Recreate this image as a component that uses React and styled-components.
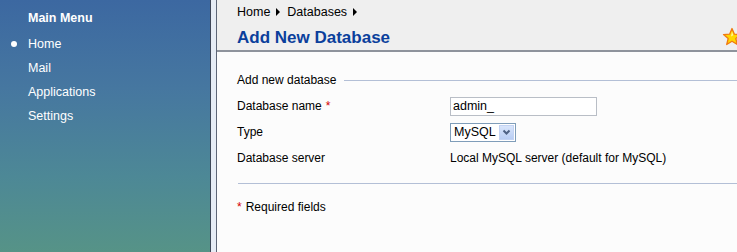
import React from 'react';
import styled, { createGlobalStyle } from 'styled-components';

const GlobalStyle = createGlobalStyle`
  html, body {
    margin: 0;
    padding: 0;
    background: #fcfcfc;
  }
  body {
    font-family: "Liberation Sans", Arial, sans-serif;
    font-size: 12px;
    color: #000;
  }
`;

const Page = styled.div`
  display: flex;
  height: 252px;
  overflow: hidden;
`;

const Sidebar = styled.aside`
  width: 210px;
  flex-shrink: 0;
  background: linear-gradient(180deg, #3c68a1 0%, #4677a0 35%, #4d8896 70%, #569387 100%);
  padding: 10px 0 0 0;
  box-sizing: border-box;
  color: #fff;
`;

const MenuTitle = styled.div`
  font-weight: bold;
  font-size: 12.5px;
  padding-left: 28px;
  height: 16px;
  line-height: 16px;
  margin-bottom: 10px;
`;

const MenuList = styled.ul`
  list-style: none;
  margin: 0;
  padding: 0;
`;

const MenuItem = styled.li`
  position: relative;
  padding-left: 28px;
  height: 24px;
  line-height: 16px;
  font-size: 12.5px;

  &::before {
    content: '';
    display: ${p => (p.$active ? 'block' : 'none')};
    position: absolute;
    left: 11px;
    top: 5px;
    width: 6px;
    height: 6px;
    border-radius: 50%;
    background: #fff;
  }
`;

const Divider = styled.div`
  width: 5px;
  flex-shrink: 0;
  background: #e6ecf5;
  border-left: 1px solid #3e4758;
  border-right: 1px solid #5d6576;
`;

const Main = styled.main`
  flex: 1;
  display: flex;
  flex-direction: column;
  overflow: hidden;
  background: #fcfcfc;
`;

const Header = styled.header`
  background: #efefef;
  height: 52px;
  border-bottom: 2px solid #8e939c;
  padding: 4px 0 0 20px;
  box-sizing: border-box;
`;

const Crumbs = styled.div`
  display: flex;
  align-items: center;
  gap: 5px;
  font-size: 12.5px;
  height: 16px;
  line-height: 16px;
`;

const Arrow = styled.span`
  width: 0;
  height: 0;
  border-top: 4px solid transparent;
  border-bottom: 4px solid transparent;
  border-left: 4px solid #000;
  margin: 0 2px 0 1px;
`;

const TitleRow = styled.div`
  display: flex;
  align-items: center;
  margin-top: 7px;
`;

const Title = styled.h1`
  margin: 0;
  font-size: 17px;
  font-weight: bold;
  color: #0b3f9c;
  line-height: 22px;
  flex: 1;
`;

const Star = styled.svg`
  width: 20px;
  height: 20px;
  margin-right: -5px;
  margin-top: -2px;
`;

const Content = styled.section`
  padding: 20px 0 0 20px;
`;

const Legend = styled.div`
  display: flex;
  align-items: center;
  gap: 8px;
  font-size: 12px;
  height: 16px;

  &::after {
    content: '';
    flex: 1;
    height: 1px;
    background: #b3bfd6;
  }
`;

const Rows = styled.div`
  margin-top: 5px;
  display: grid;
  grid-template-columns: 213px 1fr;
  grid-auto-rows: 26px;
  align-items: center;
  font-size: 12px;
`;

const Label = styled.div`
  line-height: 16px;
`;

const Req = styled.span`
  color: #d40000;
  margin-left: ${p => (p.$after ? '4px' : '0')};
  margin-right: ${p => (p.$after ? '0' : '4px')};
`;

const TextInput = styled.input`
  width: 147px;
  height: 19px;
  box-sizing: border-box;
  border: 1px solid #b9bec6;
  background: #fff;
  font-family: "Liberation Sans", Arial, sans-serif;
  font-size: 12.5px;
  padding: 0 2px;
  color: #000;
  outline: none;
`;

const Select = styled.div`
  display: inline-flex;
  align-items: center;
  width: 66px;
  height: 19px;
  box-sizing: border-box;
  border: 1px solid #7f9db9;
  background: #fff;
  padding-left: 3px;
  font-size: 12.5px;
  justify-content: space-between;
`;

const SelectButton = styled.span`
  width: 15px;
  height: 15px;
  margin-right: 1px;
  background: linear-gradient(180deg, #d9e5fb 0%, #b8cdf4 100%);
  border: 1px solid #c3d3f3;
  box-sizing: border-box;
  display: flex;
  align-items: center;
  justify-content: center;
`;

const Rule = styled.div`
  height: 1px;
  background: #b3bfd6;
  margin: 12px 0 0 1px;
`;

const Footnote = styled.div`
  margin-top: 15px;
  font-size: 12px;
  line-height: 16px;
`;

const menu = [
  { label: 'Home', active: true },
  { label: 'Mail' },
  { label: 'Applications' },
  { label: 'Settings' },
];

const App = () => {
  return (
    <>
      <GlobalStyle />
      <Page>
        <Sidebar>
          <MenuTitle>Main Menu</MenuTitle>
          <MenuList>
            {menu.map(item => (
              <MenuItem key={item.label} $active={item.active}>
                {item.label}
              </MenuItem>
            ))}
          </MenuList>
        </Sidebar>
        <Divider />
        <Main>
          <Header>
            <Crumbs>
              Home <Arrow /> Databases <Arrow />
            </Crumbs>
            <TitleRow>
              <Title>Add New Database</Title>
              <Star viewBox="0 0 20 20">
                <path
                  d="M10 1.5 L12.4 7.2 L18.5 7.6 L13.8 11.5 L15.3 17.5 L10 14.2 L4.7 17.5 L6.2 11.5 L1.5 7.6 L7.6 7.2 Z"
                  fill="#ffd800"
                  stroke="#f07a10"
                  strokeWidth="1.3"
                  strokeLinejoin="round"
                />
                <path d="M10 4.5 L11.3 8.3 L9 9.5 Z" fill="#fff6a0" />
              </Star>
            </TitleRow>
          </Header>
          <Content>
            <Legend>Add new database</Legend>
            <Rows>
              <Label>
                Database name<Req $after>*</Req>
              </Label>
              <div>
                <TextInput defaultValue="admin_" />
              </div>
              <Label>Type</Label>
              <div>
                <Select>
                  MySQL
                  <SelectButton>
                    <svg width="9" height="7" viewBox="0 0 9 7">
                      <path d="M1.5 1.5 L4.5 4.5 L7.5 1.5" fill="none" stroke="#4d6185" strokeWidth="2" />
                    </svg>
                  </SelectButton>
                </Select>
              </div>
              <Label>Database server</Label>
              <div>Local MySQL server (default for MySQL)</div>
            </Rows>
            <Rule />
            <Footnote>
              <Req>*</Req>Required fields
            </Footnote>
          </Content>
        </Main>
      </Page>
    </>
  );
};

export default App;
